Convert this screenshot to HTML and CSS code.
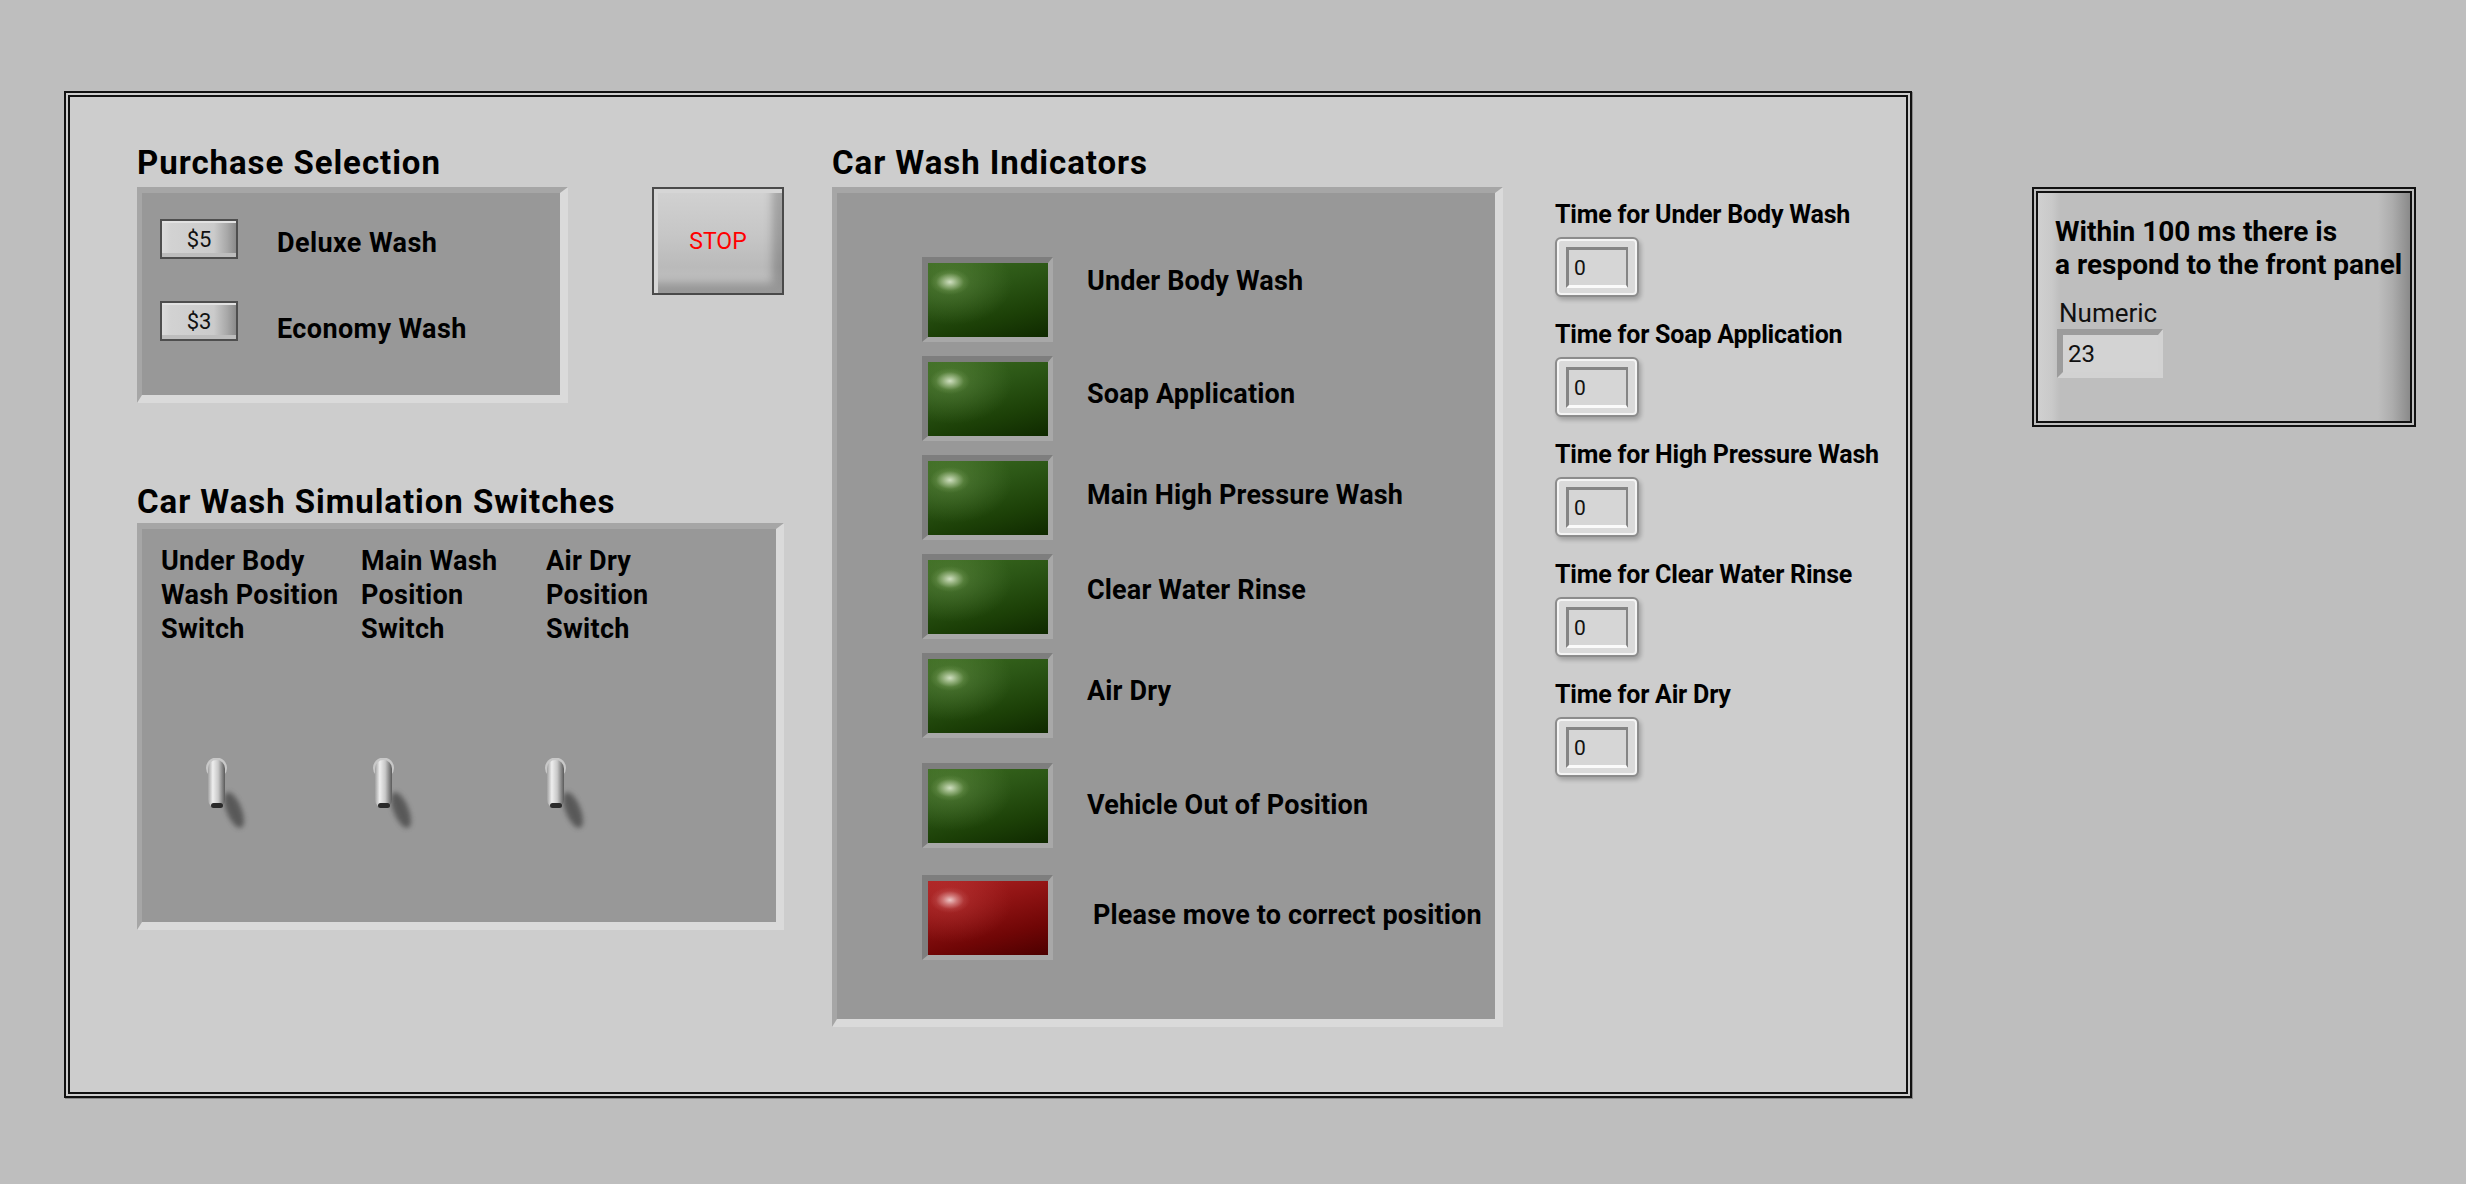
FILE: index.html
```html
<!DOCTYPE html>
<html>
<head>
<meta charset="utf-8">
<title>Car Wash</title>
<link rel="stylesheet" href="styles.css">
</head>
<body>
<div class="screen">
  <div class="frame">
    <div class="frame-inner">
      <div class="col1">
        <div class="heading">Purchase Selection</div>
        <div class="top-row">
          <div class="recess purchase">
            <div class="buy-row">
              <div class="buy-btn">$5</div>
              <div class="buy-label r1">Deluxe Wash</div>
            </div>
            <div class="buy-row">
              <div class="buy-btn">$3</div>
              <div class="buy-label r2">Economy Wash</div>
            </div>
          </div>
          <div class="stop-btn">STOP</div>
        </div>
        <div class="heading sw-heading">Car Wash Simulation Switches</div>
        <div class="recess switches">
          <div class="sw-labels">
            <div class="sw-label c1">Under Body<br>Wash Position<br>Switch</div>
            <div class="sw-label c2">Main Wash<br>Position<br>Switch</div>
            <div class="sw-label c3">Air Dry<br>Position<br>Switch</div>
          </div>
          <div class="toggles">
            <svg class="toggle t1" viewBox="0 0 45 75" width="45" height="75">
              <defs>
                <linearGradient id="lev1" x1="0" x2="1" y1="0" y2="0"><stop offset="0" stop-color="#a0a0a0"/><stop offset=".28" stop-color="#eeeeee"/><stop offset=".6" stop-color="#c8c8c8"/><stop offset="1" stop-color="#5a5a5a"/></linearGradient>
                <filter id="bl1" x="-50%" y="-50%" width="200%" height="200%"><feGaussianBlur stdDeviation="2.4"/></filter>
              </defs>
              <ellipse cx="28" cy="52" rx="7.5" ry="19" transform="rotate(-22 28 52)" fill="#4a4a4a" opacity=".8" filter="url(#bl1)"/>
              <circle cx="10.5" cy="10" r="10.5" fill="#e2e2e2" opacity=".65"/>
              <rect x="2" y="2" width="17" height="48" rx="8.5" fill="url(#lev1)"/>
              <rect x="5" y="45" width="12" height="5" rx="2.5" fill="#2a2a2a"/>
            </svg>
            <svg class="toggle t2" viewBox="0 0 45 75" width="45" height="75">
              <defs>
                <linearGradient id="lev2" x1="0" x2="1" y1="0" y2="0"><stop offset="0" stop-color="#a0a0a0"/><stop offset=".28" stop-color="#eeeeee"/><stop offset=".6" stop-color="#c8c8c8"/><stop offset="1" stop-color="#5a5a5a"/></linearGradient>
                <filter id="bl2" x="-50%" y="-50%" width="200%" height="200%"><feGaussianBlur stdDeviation="2.4"/></filter>
              </defs>
              <ellipse cx="28" cy="52" rx="7.5" ry="19" transform="rotate(-22 28 52)" fill="#4a4a4a" opacity=".8" filter="url(#bl2)"/>
              <circle cx="10.5" cy="10" r="10.5" fill="#e2e2e2" opacity=".65"/>
              <rect x="2" y="2" width="17" height="48" rx="8.5" fill="url(#lev2)"/>
              <rect x="5" y="45" width="12" height="5" rx="2.5" fill="#2a2a2a"/>
            </svg>
            <svg class="toggle t3" viewBox="0 0 45 75" width="45" height="75">
              <defs>
                <linearGradient id="lev3" x1="0" x2="1" y1="0" y2="0"><stop offset="0" stop-color="#a0a0a0"/><stop offset=".28" stop-color="#eeeeee"/><stop offset=".6" stop-color="#c8c8c8"/><stop offset="1" stop-color="#5a5a5a"/></linearGradient>
                <filter id="bl3" x="-50%" y="-50%" width="200%" height="200%"><feGaussianBlur stdDeviation="2.4"/></filter>
              </defs>
              <ellipse cx="28" cy="52" rx="7.5" ry="19" transform="rotate(-22 28 52)" fill="#4a4a4a" opacity=".8" filter="url(#bl3)"/>
              <circle cx="10.5" cy="10" r="10.5" fill="#e2e2e2" opacity=".65"/>
              <rect x="2" y="2" width="17" height="48" rx="8.5" fill="url(#lev3)"/>
              <rect x="5" y="45" width="12" height="5" rx="2.5" fill="#2a2a2a"/>
            </svg>
          </div>
        </div>
      </div>

      <div class="col2">
        <div class="heading">Car Wash Indicators</div>
        <div class="recess indicators">
          <div class="led-row first"><div class="led green"></div><div class="led-label">Under Body Wash</div></div>
          <div class="led-row"><div class="led green"></div><div class="led-label">Soap Application</div></div>
          <div class="led-row r3"><div class="led green"></div><div class="led-label">Main High Pressure Wash</div></div>
          <div class="led-row r4"><div class="led green"></div><div class="led-label">Clear Water Rinse</div></div>
          <div class="led-row"><div class="led green"></div><div class="led-label">Air Dry</div></div>
          <div class="led-row vehicle"><div class="led green"></div><div class="led-label">Vehicle Out of Position</div></div>
          <div class="led-row warn"><div class="led red"></div><div class="led-label">Please move to correct position</div></div>
        </div>
      </div>

      <div class="col3">
        <div class="time-group">
          <div class="time-label">Time for Under Body Wash</div>
          <div class="num"><div class="num-field">0</div></div>
        </div>
        <div class="time-group">
          <div class="time-label">Time for Soap Application</div>
          <div class="num"><div class="num-field">0</div></div>
        </div>
        <div class="time-group">
          <div class="time-label">Time for High Pressure Wash</div>
          <div class="num"><div class="num-field">0</div></div>
        </div>
        <div class="time-group">
          <div class="time-label">Time for Clear Water Rinse</div>
          <div class="num"><div class="num-field">0</div></div>
        </div>
        <div class="time-group">
          <div class="time-label">Time for Air Dry</div>
          <div class="num"><div class="num-field">0</div></div>
        </div>
      </div>
    </div>
  </div>

  <div class="side">
    <div class="side-inner">
      <div class="side-title">Within 100 ms there is<br>a respond to the front panel</div>
      <div class="side-num-label">Numeric</div>
      <div class="side-num">23</div>
    </div>
  </div>
</div>
</body>
</html>
```
FILE: styles.css
```css
html, body {
  margin: 0;
  padding: 0;
}
body {
  width: 2466px;
  height: 1184px;
  overflow: hidden;
  background: #bebebe;
  font-family: Roboto, "Liberation Sans", Arial, sans-serif;
  color: #000;
}
.screen {
  display: flex;
  align-items: flex-start;
  padding: 91px 0 0 64px;
}

/* main double frame */
.frame {
  width: 1848px;
  height: 1007px;
  box-sizing: border-box;
  border: 2px solid #111;
  padding: 2px;
  background: #cdcdcd;
  box-shadow: 1px 1px 0 #8a8a8a;
  flex: none;
}
.frame-inner {
  height: 100%;
  box-sizing: border-box;
  border: 2px solid #111;
  background: #cdcdcd;
  display: flex;
  align-items: flex-start;
  padding: 49px 0 0 67px;
}

.heading {
  font-weight: 700;
  font-size: 33px;
  line-height: 33px;
  height: 33px;
  margin-bottom: 8px;
  letter-spacing: 0.95px;
  white-space: nowrap;
}

.recess {
  box-sizing: border-box;
  background: #989898;
  border-style: solid;
  border-width: 6px 8px 8px 5px;
  border-color: #a6a6a6 #dadada #dadada #a6a6a6;
}

/* column 1 */
.col1 {
  width: 647px;
  flex: none;
}
.top-row {
  display: flex;
  align-items: flex-start;
}
.purchase {
  width: 431px;
  height: 216px;
  padding: 26px 0 0 18px;
}
.buy-row {
  display: flex;
  align-items: flex-start;
  height: 40px;
}
.buy-row + .buy-row {
  margin-top: 42px;
}
.buy-btn {
  width: 78px;
  height: 40px;
  box-sizing: border-box;
  border: 2px solid #4e4e4e;
  background: linear-gradient(90deg, #dcdcdc 0%, #d2d2d2 12%, #cbcbcb 70%, #a8a8a8 88%, #8a8a8a 100%);
  box-shadow: inset 0 2px 0 #e2e2e2, inset 0 -4px 0 #bdbdbd;
  display: flex;
  align-items: center;
  justify-content: center;
  font-size: 22px;
  color: #111;
}
.buy-label {
  margin-left: 39px;
  font-weight: 700;
  font-size: 27px;
  line-height: 27px;
  letter-spacing: 0.4px;
  white-space: nowrap;
}
.buy-label.r1 { margin-top: 11px; }
.buy-label.r2 { margin-top: 15px; }

.stop-btn {
  margin-left: 84px;
  width: 132px;
  height: 108px;
  box-sizing: border-box;
  border: 2px solid #4a4a4a;
  background: linear-gradient(180deg, #d2d2d2 0%, #c6c6c6 45%, #bababa 75%, #c2c2c2 100%);
  box-shadow: inset 4px 4px 0 #d6d6d6, inset -10px -10px 8px rgba(0, 0, 0, 0.22);
  display: flex;
  align-items: center;
  justify-content: center;
  color: #ff0000;
  font-size: 23px;
}

.sw-heading {
  margin-top: 82px;
  margin-bottom: 5px;
}
.switches {
  width: 647px;
  height: 407px;
  padding: 15px 0 0 19px;
}
.sw-labels {
  display: flex;
}
.sw-label {
  font-weight: 700;
  font-size: 27px;
  line-height: 34px;
  letter-spacing: 0.3px;
  white-space: nowrap;
}
.sw-label.c1 { width: 200px; }
.sw-label.c2 { width: 185px; }
.toggles {
  display: flex;
  margin-top: 112px;
  padding-left: 45px;
}
.toggle {
  display: block;
  flex: none;
}
.toggle.t2 { margin-left: 122px; }
.toggle.t3 { margin-left: 127px; }

/* column 2 */
.col2 {
  width: 671px;
  margin-left: 48px;
  flex: none;
}
.indicators {
  width: 671px;
  height: 840px;
  padding: 64px 0 0 85px;
}
.led-row {
  display: flex;
  align-items: flex-start;
  height: 85px;
  margin-top: 14px;
}
.led-row.first { margin-top: 0; }
.led-row.vehicle { margin-top: 25px; }
.led-row.warn { margin-top: 27px; }
.led {
  width: 131px;
  height: 85px;
  box-sizing: border-box;
  flex: none;
  border-style: solid;
  border-width: 6px 5px 5px 6px;
  border-color: #7e7e7e #a8a8a8 #a8a8a8 #7e7e7e;
}
.led.green {
  background:
    radial-gradient(ellipse 20px 13px at 22px 19px, rgba(214, 228, 200, 0.95) 0%, rgba(176, 200, 154, 0.7) 35%, rgba(120, 158, 90, 0.3) 70%, rgba(90, 130, 60, 0) 100%),
    radial-gradient(ellipse 60px 42px at 24px 20px, rgba(110, 150, 80, 0.45) 0%, rgba(80, 120, 50, 0) 100%),
    linear-gradient(165deg, #3a6a1f 0%, #2c5716 35%, #1c4007 70%, #0f2900 100%);
}
.led.red {
  background:
    radial-gradient(ellipse 20px 13px at 22px 19px, rgba(240, 206, 206, 0.95) 0%, rgba(222, 150, 150, 0.7) 35%, rgba(196, 90, 90, 0.3) 70%, rgba(170, 50, 50, 0) 100%),
    radial-gradient(ellipse 60px 42px at 24px 20px, rgba(200, 70, 70, 0.4) 0%, rgba(160, 40, 40, 0) 100%),
    linear-gradient(165deg, #ad2222 0%, #911414 35%, #700606 70%, #4c0000 100%);
}
.led-label {
  margin-left: 34px;
  margin-top: 25px;
  font-weight: 700;
  font-size: 27px;
  line-height: 27px;
  letter-spacing: 0.15px;
  white-space: nowrap;
}
.led-row.first .led-label { margin-top: 11px; }
.led-row.r3 .led-label { margin-top: 27px; }
.led-row.r4 .led-label { margin-top: 23px; }
.led-row.vehicle .led-label { margin-top: 29px; }
.led-row.warn .led-label { margin-top: 27px; margin-left: 40px; }

/* column 3 */
.col3 {
  margin-left: 52px;
  margin-top: 56px;
  display: flex;
  flex-direction: column;
  gap: 25px;
  flex: none;
}
.time-label {
  font-weight: 700;
  font-size: 25px;
  line-height: 25px;
  letter-spacing: -0.2px;
  white-space: nowrap;
}
.num {
  margin-top: 10px;
  width: 84px;
  height: 60px;
  box-sizing: border-box;
  border: 2px solid #8c8c8c;
  border-radius: 6px;
  background: #dadada;
  box-shadow: inset 0 0 0 2px #f4f4f4, 2px 3px 4px rgba(0, 0, 0, 0.22);
  padding: 8px 0 0 9px;
}
.num-field {
  width: 62px;
  height: 41px;
  box-sizing: border-box;
  border-style: solid;
  border-width: 3px 2px 3px 3px;
  border-color: #858585 #858585 #fafafa #858585;
  background: #d6d6d6;
  display: flex;
  align-items: center;
  padding-left: 5px;
  font-size: 21px;
  color: #111;
}

/* side panel */
.side {
  margin-left: 120px;
  margin-top: 96px;
  width: 384px;
  height: 240px;
  box-sizing: border-box;
  border: 2px solid #111;
  padding: 2px;
  background: #bebebe;
  flex: none;
}
.side-inner {
  height: 100%;
  box-sizing: border-box;
  border: 2px solid #111;
  background: linear-gradient(90deg, #d0d0d0 0px, #c9c9c9 14px, #bebebe 22px, #bebebe 340px, #adadad 354px, #929292 368px, #8a8a8a 100%);
  padding: 22px 0 0 17px;
}
.side-title {
  font-weight: 700;
  font-size: 28px;
  line-height: 33px;
  white-space: nowrap;
}
.side-num-label {
  margin-top: 19px;
  margin-left: 4px;
  font-size: 26px;
  line-height: 26px;
  color: #111;
}
.side-num {
  margin-top: 3px;
  margin-left: 2px;
  width: 106px;
  height: 49px;
  box-sizing: border-box;
  border-style: solid;
  border-width: 6px 5px 6px 6px;
  border-color: #9c9c9c #d2d2d2 #d2d2d2 #9c9c9c;
  background: #d3d3d3;
  display: flex;
  align-items: center;
  padding-left: 5px;
  font-size: 24px;
  color: #111;
}
```
